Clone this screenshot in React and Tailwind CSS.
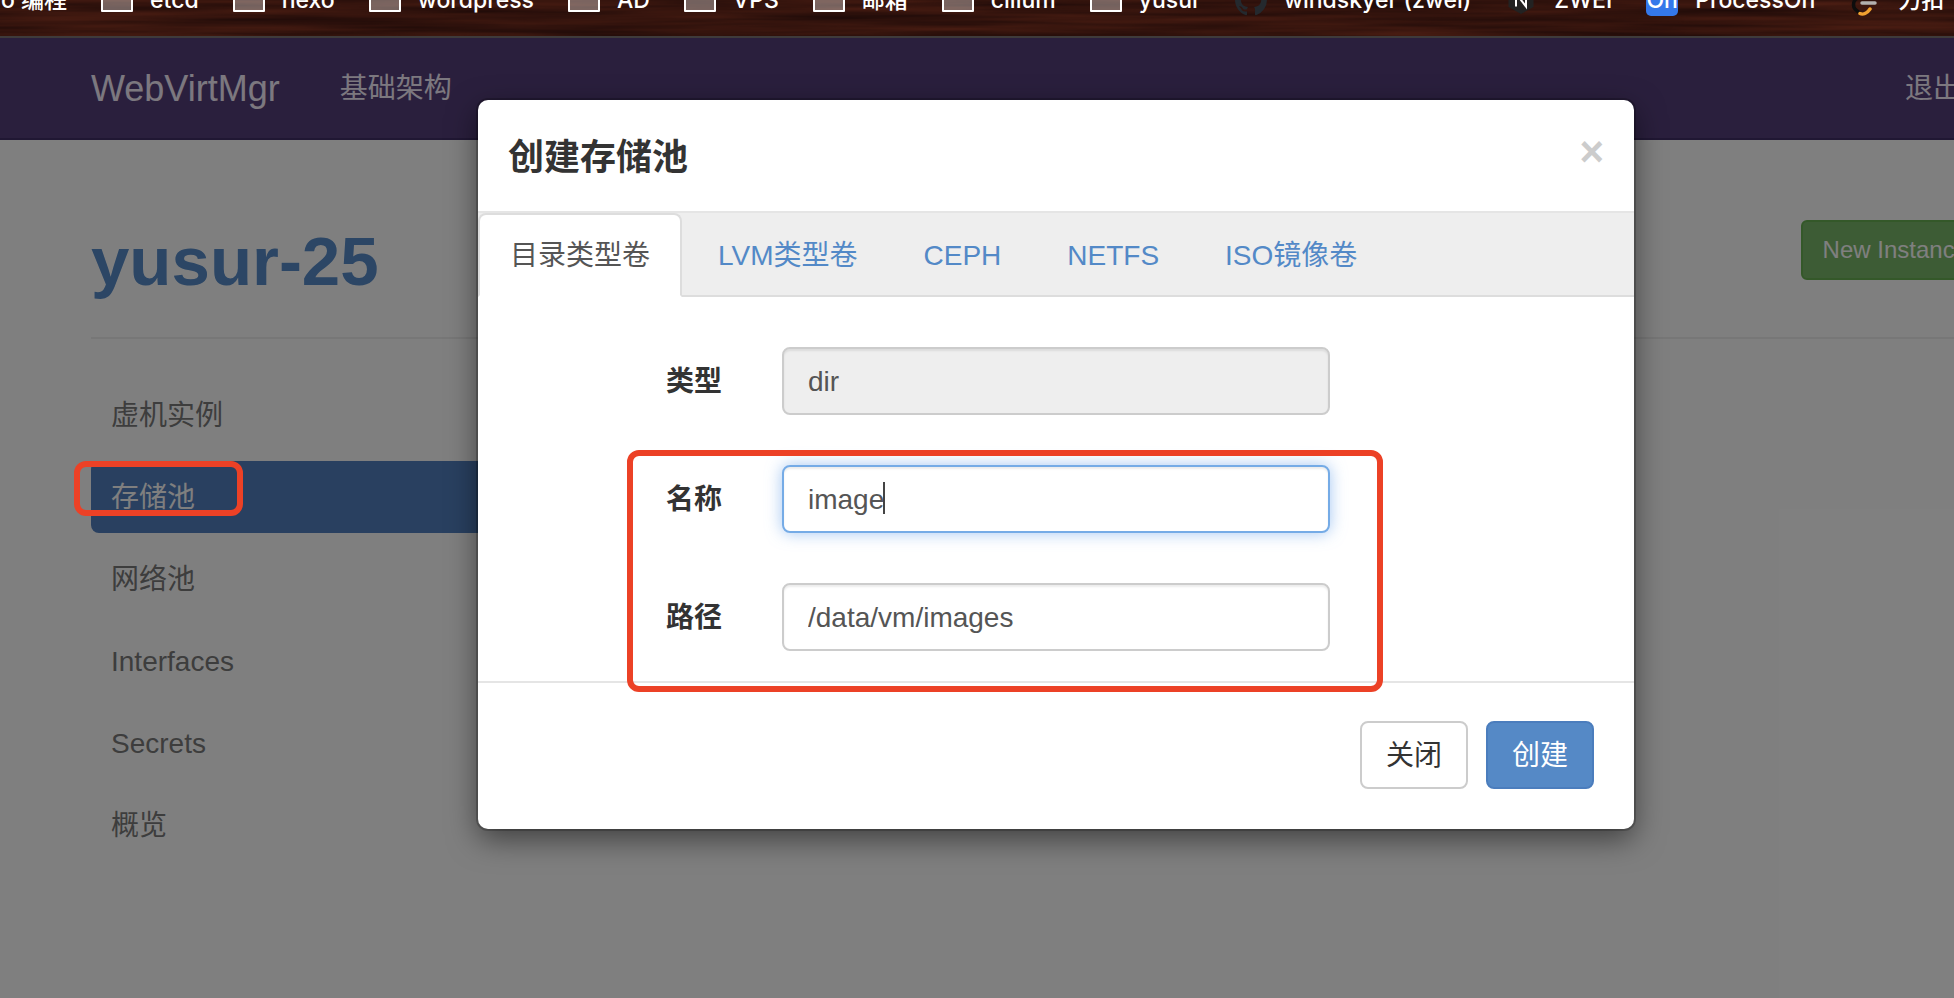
import React from "react";

const bookmarks = [
  { label: "etcd", icon: "folder" },
  { label: "hexo", icon: "folder" },
  { label: "wordpress", icon: "folder" },
  { label: "AD", icon: "folder" },
  { label: "VPS", icon: "folder" },
  { label: "邮箱", icon: "folder" },
  { label: "cilium", icon: "folder" },
  { label: "yusur", icon: "folder" },
  { label: "windskyer (zwei)", icon: "github" },
  { label: "ZWEI", icon: "next" },
  { label: "ProcessOn", icon: "on" },
  { label: "力扣", icon: "leetcode" },
];

const sections = ["虚机实例", "存储池", "网络池", "Interfaces", "Secrets", "概览"];
const tabs = ["目录类型卷", "LVM类型卷", "CEPH", "NETFS", "ISO镜像卷"];

function BookmarkIcon({ kind }) {
  if (kind === "github") {
    return (
      <svg className="size-8 shrink-0" viewBox="0 0 16 16" fill="#24292e" aria-hidden="true">
        <path d="M8 0C3.58 0 0 3.58 0 8c0 3.54 2.29 6.53 5.47 7.59.4.07.55-.17.55-.38 0-.19-.01-.82-.01-1.49-2.01.37-2.53-.49-2.69-.94-.09-.23-.48-.94-.82-1.13-.28-.15-.68-.52-.01-.53.63-.01 1.08.58 1.23.82.72 1.21 1.87.87 2.33.66.07-.52.28-.87.51-1.07-1.78-.2-3.64-.89-3.64-3.95 0-.87.31-1.59.82-2.15-.08-.2-.36-1.02.08-2.12 0 0 .67-.21 2.2.82.64-.18 1.32-.27 2-.27s1.36.09 2 .27c1.53-1.04 2.2-.82 2.2-.82.44 1.1.16 1.92.08 2.12.51.56.82 1.27.82 2.15 0 3.07-1.87 3.75-3.65 3.95.29.25.54.73.54 1.48 0 1.07-.01 1.93-.01 2.2 0 .21.15.46.55.38A8.01 8.01 0 0 0 16 8c0-4.42-3.58-8-8-8z" />
      </svg>
    );
  }
  if (kind === "next") {
    return (
      <svg className="size-8 shrink-0" viewBox="0 0 32 32" aria-hidden="true">
        <path d="M16 1l12.500 7v15L16 30 3.500 23V8z" fill="#222" />
        <path d="M11 22.500V9.500l10 13V9.500" fill="none" stroke="#fff" strokeWidth="2" />
      </svg>
    );
  }
  if (kind === "on") {
    return (
      <span className="flex size-8 shrink-0 items-center justify-center rounded-[5px] bg-[#3478ea] text-[23px] leading-8 font-medium">
        On
      </span>
    );
  }
  if (kind === "leetcode") {
    return (
      <svg className="size-8 shrink-0" viewBox="0 0 32 32" fill="none" strokeLinecap="round" aria-hidden="true">
        <path d="M19 3L6 16c-2 2.500-2 7 0 9l4 3.500" stroke="#0d0d0d" strokeWidth="3.500" />
        <path d="M11 29.500c3 1.500 7 0 10-4.500" stroke="#f0a030" strokeWidth="3.500" />
        <path d="M13 19h13" stroke="#b3b1b0" strokeWidth="3.500" />
      </svg>
    );
  }
  return (
    <svg className="size-8 shrink-0" viewBox="0 0 32 32" aria-hidden="true">
      <path d="M1 3h10l3 4h17v20H1z" fill="#fff" fillOpacity=".34" stroke="#fff" strokeWidth="2" strokeLinejoin="round" />
    </svg>
  );
}

function BookmarksBar() {
  return (
    <div className="relative h-[38px] overflow-hidden border-b-2 border-[#3f3b3b] bg-[#32130d]">
      <svg className="absolute inset-0 size-full" aria-hidden="true">
        <filter id="grain" x="0" y="0" width="100%" height="100%" colorInterpolationFilters="sRGB">
          <feTurbulence type="fractalNoise" baseFrequency="0.004 0.12" numOctaves="3" seed="7" />
          <feColorMatrix values="0.26 0 0 0 0.07  0.11 0 0 0 0.02  0.06 0 0 0 0.02  0 0 0 0 1" />
        </filter>
        <rect width="100%" height="100%" filter="url(#grain)" />
      </svg>
      <nav className="relative -mt-4 flex h-8 items-center gap-[34px] pl-px font-['Inter','Noto_Sans_CJK_SC',sans-serif] text-[23px] leading-8 font-medium whitespace-nowrap text-white">
        <a href="#go">o 编程</a>
        {bookmarks.map((b) => (
          <a key={b.label} href="#bookmark" className="flex items-center gap-[17px]">
            <BookmarkIcon kind={b.icon} />
            <span>{b.label}</span>
          </a>
        ))}
      </nav>
    </div>
  );
}

function Field({ id, label, children }) {
  return (
    <div className="flex items-center gap-[60px]">
      <label htmlFor={id} className="w-[244px] pt-0.5 text-right font-bold text-[#333]">
        {label}
      </label>
      <div className="relative w-[548px]">{children}</div>
    </div>
  );
}

const inputBase =
  "block h-[68px] w-full rounded-lg border-2 px-6 pt-0.5 text-[28px] text-[#555] outline-none";

function Modal() {
  return (
    <div
      role="dialog"
      aria-labelledby="dialog-title"
      className="relative w-full max-w-[1156px] rounded-[10px] bg-white shadow-[0_0_0_2px_rgba(0,0,0,0.2),0_10px_30px_rgba(0,0,0,0.5)]"
    >
      <div className="flex h-[113px] items-start justify-between border-b-2 border-[#e5e5e5] px-[30px] pt-8">
        <h2 id="dialog-title" className="text-[36px] leading-[52px] font-bold text-[#333]">
          创建存储池
        </h2>
        <button type="button" aria-label="Close" className="text-[42px] leading-10 font-bold text-[#ccc]">
          ×
        </button>
      </div>

      <div role="tablist" className="flex gap-0.5 border-b-2 border-[#ddd] bg-[#eee]">
        {tabs.map((t, i) => (
          <button
            key={t}
            type="button"
            role="tab"
            aria-selected={i === 0}
            className={
              i === 0
                ? "mr-0.5 -mb-0.5 rounded-t-lg border-2 border-[#ddd] border-b-white bg-white px-[30px] pt-[21px] pb-[19px] leading-10 text-[#555]"
                : "border-2 border-transparent px-[30px] pt-[21px] pb-[17px] leading-10 text-[#5389c7]"
            }
          >
            {t}
          </button>
        ))}
      </div>

      <form>
        <div className="relative flex flex-col gap-[50px] pt-[50px] pb-[30px]">
          <Field id="type" label="类型">
            <input
              id="type"
              readOnly
              defaultValue="dir"
              className={inputBase + " border-[#ccc] bg-[#eee] shadow-[inset_0_2px_2px_rgba(0,0,0,0.075)]"}
            />
          </Field>
          <Field id="name" label="名称">
            <input
              id="name"
              defaultValue="image"
              className={
                inputBase +
                " border-[#75abe6] bg-white caret-transparent shadow-[inset_0_2px_2px_rgba(0,0,0,0.075),0_0_16px_rgba(102,160,233,0.6)]"
              }
            />
            <span className="absolute top-[17px] left-[101px] h-8 w-0.5 bg-[#444]" />
          </Field>
          <Field id="path" label="路径">
            <input
              id="path"
              defaultValue="/data/vm/images"
              className={inputBase + " border-[#ccc] bg-white shadow-[inset_0_2px_2px_rgba(0,0,0,0.075)]"}
            />
          </Field>
          <div className="pointer-events-none absolute top-[153px] left-[149px] h-[242px] w-[756px] rounded-xl border-6 border-[#ec4126]" />
        </div>
        <div className="flex justify-end gap-[18px] border-t-2 border-[#e5e5e5] px-10 pt-[38px] pb-10">
          <button type="button" className="h-[68px] rounded-lg border-2 border-[#ccc] bg-white px-6 pt-0.5 text-[#333]">
            关闭
          </button>
          <button type="button" className="h-[68px] rounded-lg border-2 border-[#4b7dbd] bg-[#5589c6] px-6 pt-0.5 text-white">
            创建
          </button>
        </div>
      </form>
    </div>
  );
}

export default function App() {
  return (
    <div className="flex min-h-screen flex-col overflow-hidden bg-white font-['Liberation_Sans','Noto_Sans_CJK_SC',sans-serif] text-[28px] leading-10 [&_button]:cursor-pointer">
      <BookmarksBar />
      <div className="relative w-[calc(100%+158px)] flex-1">
        <header className="flex h-[102px] items-center border-b-2 border-[#402e66] bg-[#543e7a] px-[91px] pt-0.5 text-[#f8f0ff]">
          <a href="#home" className="mr-[60px] text-[36px]">
            WebVirtMgr
          </a>
          <a href="#infra">基础架构</a>
          <a href="#logout" className="mr-[60px] ml-auto">
            退出
          </a>
        </header>
        <main className="px-[91px] pt-20">
          <div className="flex items-start justify-between border-b-2 border-[#eee] pr-[31px] pb-[33px]">
            <h1 className="text-[69px] leading-[84px] font-bold text-[#588cca]">yusur-25</h1>
            <button
              type="button"
              className="h-[60px] rounded-md border-2 border-[#68b052] bg-[#7ab86a] px-5 text-[24px] text-white"
            >
              New Instance
            </button>
          </div>
          <ul className="mt-10 flex w-[400px] flex-col gap-[10px]">
            {sections.map((s, i) => (
              <li key={s}>
                <a
                  href="#section"
                  className={
                    i === 1
                      ? "block h-[72px] rounded-lg bg-[#5280c0] px-5 pt-[17px] text-white"
                      : "block h-[72px] px-5 pt-[17px] text-[#7a7a7a]"
                  }
                >
                  {s}
                </a>
              </li>
            ))}
          </ul>
        </main>
        <div className="absolute inset-0 flex items-start justify-center bg-black/50 pt-[62px]">
          <Modal />
        </div>
        <div className="pointer-events-none absolute top-[423px] left-[74px] h-[55px] w-[169px] rounded-xl border-6 border-[#ec4126]" />
      </div>
    </div>
  );
}
